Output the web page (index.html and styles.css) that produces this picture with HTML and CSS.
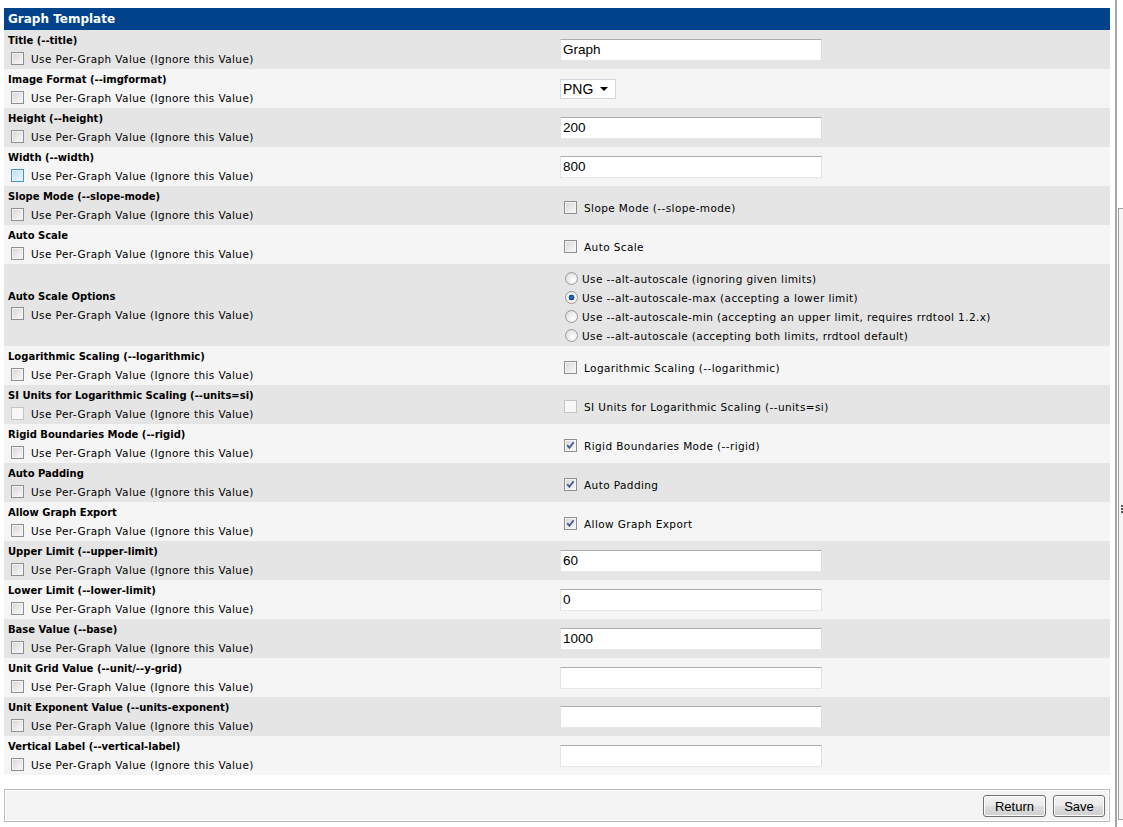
FILE: index.html
```html
<!DOCTYPE html>
<html>
<head>
<meta charset="utf-8">
<title>Graph Template</title>
<link rel="stylesheet" href="styles.css">
</head>
<body>
<div class="page">
  <div class="main">
    <div class="header">Graph Template</div>
    <div class="rows">
      <div class="row">
        <div class="lcell"><div class="lbl">Title (--title)</div><label class="chk"><input type="checkbox"><span>Use Per-Graph Value (Ignore this Value)</span></label></div>
        <div class="rcell"><input class="txt" type="text" value="Graph"></div>
      </div>
      <div class="row">
        <div class="lcell"><div class="lbl">Image Format (--imgformat)</div><label class="chk"><input type="checkbox"><span>Use Per-Graph Value (Ignore this Value)</span></label></div>
        <div class="rcell"><select class="sel"><option>PNG</option><option>SVG</option></select></div>
      </div>
      <div class="row">
        <div class="lcell"><div class="lbl">Height (--height)</div><label class="chk"><input type="checkbox"><span>Use Per-Graph Value (Ignore this Value)</span></label></div>
        <div class="rcell"><input class="txt" type="text" value="200"></div>
      </div>
      <div class="row">
        <div class="lcell"><div class="lbl">Width (--width)</div><label class="chk"><input type="checkbox" class="hover"><span>Use Per-Graph Value (Ignore this Value)</span></label></div>
        <div class="rcell"><input class="txt" type="text" value="800"></div>
      </div>
      <div class="row">
        <div class="lcell"><div class="lbl">Slope Mode (--slope-mode)</div><label class="chk"><input type="checkbox"><span>Use Per-Graph Value (Ignore this Value)</span></label></div>
        <div class="rcell"><label class="chk rchk"><input type="checkbox"><span>Slope Mode (--slope-mode)</span></label></div>
      </div>
      <div class="row">
        <div class="lcell"><div class="lbl">Auto Scale</div><label class="chk"><input type="checkbox"><span>Use Per-Graph Value (Ignore this Value)</span></label></div>
        <div class="rcell"><label class="chk rchk"><input type="checkbox"><span>Auto Scale</span></label></div>
      </div>
      <div class="row">
        <div class="lcell"><div class="lbl">Auto Scale Options</div><label class="chk"><input type="checkbox"><span>Use Per-Graph Value (Ignore this Value)</span></label></div>
        <div class="rcell">
          <div class="radios">
            <label class="ropt"><input type="radio" name="as"><span>Use --alt-autoscale (ignoring given limits)</span></label>
            <label class="ropt"><input type="radio" name="as" checked><span>Use --alt-autoscale-max (accepting a lower limit)</span></label>
            <label class="ropt"><input type="radio" name="as"><span>Use --alt-autoscale-min (accepting an upper limit, requires rrdtool 1.2.x)</span></label>
            <label class="ropt"><input type="radio" name="as"><span>Use --alt-autoscale (accepting both limits, rrdtool default)</span></label>
          </div>
        </div>
      </div>
      <div class="row">
        <div class="lcell"><div class="lbl">Logarithmic Scaling (--logarithmic)</div><label class="chk"><input type="checkbox"><span>Use Per-Graph Value (Ignore this Value)</span></label></div>
        <div class="rcell"><label class="chk rchk"><input type="checkbox"><span>Logarithmic Scaling (--logarithmic)</span></label></div>
      </div>
      <div class="row">
        <div class="lcell"><div class="lbl">SI Units for Logarithmic Scaling (--units=si)</div><label class="chk"><input type="checkbox" disabled><span>Use Per-Graph Value (Ignore this Value)</span></label></div>
        <div class="rcell"><label class="chk rchk"><input type="checkbox" disabled><span>SI Units for Logarithmic Scaling (--units=si)</span></label></div>
      </div>
      <div class="row">
        <div class="lcell"><div class="lbl">Rigid Boundaries Mode (--rigid)</div><label class="chk"><input type="checkbox"><span>Use Per-Graph Value (Ignore this Value)</span></label></div>
        <div class="rcell"><label class="chk rchk"><input type="checkbox" checked><span>Rigid Boundaries Mode (--rigid)</span></label></div>
      </div>
      <div class="row">
        <div class="lcell"><div class="lbl">Auto Padding</div><label class="chk"><input type="checkbox"><span>Use Per-Graph Value (Ignore this Value)</span></label></div>
        <div class="rcell"><label class="chk rchk"><input type="checkbox" checked><span>Auto Padding</span></label></div>
      </div>
      <div class="row">
        <div class="lcell"><div class="lbl">Allow Graph Export</div><label class="chk"><input type="checkbox"><span>Use Per-Graph Value (Ignore this Value)</span></label></div>
        <div class="rcell"><label class="chk rchk"><input type="checkbox" checked><span>Allow Graph Export</span></label></div>
      </div>
      <div class="row">
        <div class="lcell"><div class="lbl">Upper Limit (--upper-limit)</div><label class="chk"><input type="checkbox"><span>Use Per-Graph Value (Ignore this Value)</span></label></div>
        <div class="rcell"><input class="txt" type="text" value="60"></div>
      </div>
      <div class="row">
        <div class="lcell"><div class="lbl">Lower Limit (--lower-limit)</div><label class="chk"><input type="checkbox"><span>Use Per-Graph Value (Ignore this Value)</span></label></div>
        <div class="rcell"><input class="txt" type="text" value="0"></div>
      </div>
      <div class="row">
        <div class="lcell"><div class="lbl">Base Value (--base)</div><label class="chk"><input type="checkbox"><span>Use Per-Graph Value (Ignore this Value)</span></label></div>
        <div class="rcell"><input class="txt" type="text" value="1000"></div>
      </div>
      <div class="row">
        <div class="lcell"><div class="lbl">Unit Grid Value (--unit/--y-grid)</div><label class="chk"><input type="checkbox"><span>Use Per-Graph Value (Ignore this Value)</span></label></div>
        <div class="rcell"><input class="txt" type="text" value=""></div>
      </div>
      <div class="row">
        <div class="lcell"><div class="lbl">Unit Exponent Value (--units-exponent)</div><label class="chk"><input type="checkbox"><span>Use Per-Graph Value (Ignore this Value)</span></label></div>
        <div class="rcell"><input class="txt" type="text" value=""></div>
      </div>
      <div class="row">
        <div class="lcell"><div class="lbl">Vertical Label (--vertical-label)</div><label class="chk"><input type="checkbox"><span>Use Per-Graph Value (Ignore this Value)</span></label></div>
        <div class="rcell"><input class="txt" type="text" value=""></div>
      </div>
    </div>
    <div class="actions">
      <div class="actions-inner">
        <button class="btn btn-return" type="button">Return</button>
        <button class="btn btn-save" type="button">Save</button>
      </div>
    </div>
  </div>
  <div class="edge">
    <div class="pane"><div class="grip"></div></div>
  </div>
</div>
</body>
</html>
```

FILE: styles.css
```css
html, body {
  margin: 0;
  padding: 0;
  background: #ffffff;
}
body {
  font-family: "DejaVu Sans", Verdana, sans-serif;
  font-size: 10px;
  color: #000000;
}
.page {
  display: flex;
  height: 827px;
  overflow: hidden;
}
.main {
  width: 1106px;
  margin: 8px 0 0 4px;
  flex: none;
}
.header {
  height: 22px;
  line-height: 22px;
  background: #00438c;
  color: #ffffff;
  font-weight: bold;
  font-size: 12px;
  padding-left: 4px;
}
.row {
  display: grid;
  grid-template-columns: 553px 553px;
}
.row:nth-child(odd) { background: #e5e5e5; }
.row:nth-child(even) { background: #f5f5f5; }

.lcell {
  padding: 3px 4px;
  display: flex;
  flex-direction: column;
  justify-content: center;
}
.lbl {
  font-weight: bold;
  line-height: 15px;
  white-space: nowrap;
}
.chk {
  display: flex;
  align-items: center;
  height: 18px;
  white-space: nowrap;
  font-size: 10.5px;
  letter-spacing: 0.4px;
}
.lcell .chk {
  margin-top: 1px;
  margin-bottom: -1px;
}
.chk span {
  padding-top: 2px;
}
.rcell {
  padding: 0 3px;
  display: flex;
  align-items: center;
}
.rchk {
  padding-top: 3px;
}

input[type=checkbox] {
  -webkit-appearance: none;
  appearance: none;
  width: 13px;
  height: 13px;
  margin: 0 7px 0 3px;
  box-sizing: border-box;
  border: 1px solid #8e8f8f;
  box-shadow: inset 0 0 0 1px #f3f3f3;
  background: linear-gradient(135deg, #d6d6d6 0%, #eaeaea 55%, #fbfbfb 100%);
  flex: none;
}
.rchk input[type=checkbox] {
  margin-left: 4px;
}
input[type=checkbox]:checked {
  background-image: url("data:image/svg+xml;utf8,<svg xmlns='http://www.w3.org/2000/svg' width='11' height='11' viewBox='0 0 11 11'><path d='M2.2 5.2 L4.4 7.8 L8.6 2.2' fill='none' stroke='%234a5d92' stroke-width='1.9'/></svg>"), linear-gradient(135deg, #d6d6d6 0%, #eaeaea 55%, #fbfbfb 100%);
  background-repeat: no-repeat;
  background-position: center;
}
input[type=checkbox]:disabled {
  border-color: #c4c4c4;
  background: #f7f7f7;
  box-shadow: none;
}
input[type=checkbox].hover {
  border-color: #4e8fc4;
  box-shadow: inset 0 0 0 1px #e2f1fb;
  background: linear-gradient(135deg, #b9dcf2 0%, #d8ecf9 55%, #f2f9fe 100%);
}

.radios {
  display: flex;
  flex-direction: column;
  padding: 5px 0 1px;
}
.ropt {
  display: flex;
  align-items: center;
  height: 19px;
  white-space: nowrap;
  font-size: 10.5px;
  letter-spacing: 0.4px;
}
input[type=radio] {
  -webkit-appearance: none;
  appearance: none;
  width: 13px;
  height: 13px;
  margin: 0 4px 0 5px;
  box-sizing: border-box;
  border: 1px solid #9a9a9a;
  border-radius: 50%;
  background: radial-gradient(circle at 65% 65%, #ffffff 0%, #eeeeee 45%, #d4d4d4 100%);
  flex: none;
}
input[type=radio]:checked {
  background: radial-gradient(circle at 50% 50%, #2b7fd6 0%, #145aa8 22%, #0d3f7a 34%, #e9e9e9 40%, #f6f6f6 60%, #d6d6d6 100%);
}

.txt {
  width: 262px;
  height: 22px;
  box-sizing: border-box;
  border: 1px solid #dbdfe6;
  border-top-color: #abadb3;
  border-left-color: #e2e3ea;
  border-right-color: #dbdfe6;
  border-bottom-color: #e3e9ef;
  background: #ffffff;
  font-family: "Liberation Sans", Arial, sans-serif;
  font-size: 13.5px;
  color: #000;
  padding: 0 2px;
  margin: 0;
  outline: none;
}
.sel {
  -webkit-appearance: none;
  appearance: none;
  width: 56px;
  height: 20px;
  box-sizing: border-box;
  border: 1px solid #d3d7df;
  border-radius: 0;
  background-color: #ffffff;
  background-image: url("data:image/svg+xml;utf8,<svg xmlns='http://www.w3.org/2000/svg' width='8' height='4' viewBox='0 0 8 4'><path d='M0 0 L8 0 L4 4 Z' fill='%23000'/></svg>");
  background-repeat: no-repeat;
  background-position: right 7px center;
  font-family: "Liberation Sans", Arial, sans-serif;
  font-size: 14px;
  color: #000;
  padding: 0 0 0 2px;
  margin: 0;
  outline: none;
}

.actions {
  margin-top: 14px;
  border: 1px solid #bdbdbd;
  padding: 1px;
  background: #ffffff;
}
.actions-inner {
  background: #f3f3f3;
  display: flex;
  justify-content: flex-end;
  gap: 7px;
  padding: 4px 3px 3px 0;
}
.btn {
  height: 22px;
  box-sizing: border-box;
  border: 1px solid #707070;
  border-radius: 3px;
  background: linear-gradient(#f2f2f2 0%, #ebebeb 48%, #dddddd 52%, #cfcfcf 100%);
  box-shadow: inset 0 0 0 1px #fcfcfc;
  font-family: "Liberation Sans", Arial, sans-serif;
  font-size: 13px;
  color: #000;
  padding: 0;
  margin: 0;
}
.btn-return { width: 63px; }
.btn-save { width: 52px; }

.edge {
  flex: 1;
  margin-left: 5px;
  border-left: 2px solid #a6a6a6;
  display: flex;
  flex-direction: column;
}
.pane {
  margin-top: 208px;
  margin-left: 1px;
  height: 612px;
  box-sizing: border-box;
  border: 1px solid #a0a0a0;
  border-right: none;
  background: #f6f6f6;
  padding-top: 296px;
}
.grip {
  width: 3px;
  height: 2px;
  margin-left: 2px;
  background: #555555;
  box-shadow: 0 3px 0 #555555, 0 6px 0 #555555;
}
```
